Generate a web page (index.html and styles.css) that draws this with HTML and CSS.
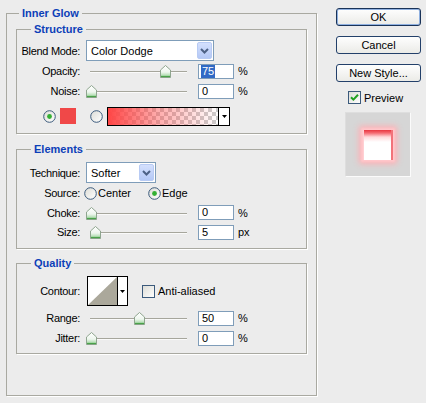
FILE: index.html
```html
<!DOCTYPE html>
<html>
<head>
<meta charset="utf-8">
<link rel="stylesheet" href="styles.css">
</head>
<body>
<div class="dialog">
  <fieldset class="group outer">
    <legend class="legend-outer">Inner Glow</legend>

    <fieldset class="group sub structure">
      <legend>Structure</legend>
      <div class="row row-select">
        <span class="lbl">Blend Mode:</span>
        <div class="select blend">
          <span class="select-txt">Color Dodge</span>
          <span class="select-btn"><svg width="9" height="6" viewBox="0 0 9 6"><path d="M1 1 L4.5 4.5 L8 1" fill="none" stroke="#4d6185" stroke-width="2"/></svg></span>
        </div>
      </div>
      <div class="row row-slider">
        <span class="lbl">Opacity:</span>
        <div class="slider"><div class="track"></div><svg class="thumb" style="left:75px" width="11" height="13" viewBox="0 0 11 13"><use href="#thumb"/></svg></div>
        <div class="num"><span class="hl">75</span></div>
        <span class="unit">%</span>
      </div>
      <div class="row row-slider">
        <span class="lbl">Noise:</span>
        <div class="slider"><div class="track"></div><svg class="thumb" style="left:1px" width="11" height="13" viewBox="0 0 11 13"><use href="#thumb"/></svg></div>
        <div class="num">0</div>
        <span class="unit">%</span>
      </div>
      <div class="row row-color">
        <svg class="radio r-first" width="13" height="13" viewBox="0 0 13 13"><use href="#radio-on"/></svg>
        <span class="swatch"></span>
        <svg class="radio r-second" width="13" height="13" viewBox="0 0 13 13"><use href="#radio-off"/></svg>
        <div class="gradpick">
          <span class="grad"></span>
          <span class="pick-arrow"><svg width="5" height="3" viewBox="0 0 5 3"><path d="M0 0 H5 L2.5 3 Z" fill="#000"/></svg></span>
        </div>
      </div>
    </fieldset>

    <fieldset class="group sub elements">
      <legend>Elements</legend>
      <div class="row row-select">
        <span class="lbl">Technique:</span>
        <div class="select technique">
          <span class="select-txt">Softer</span>
          <span class="select-btn"><svg width="9" height="6" viewBox="0 0 9 6"><path d="M1 1 L4.5 4.5 L8 1" fill="none" stroke="#4d6185" stroke-width="2"/></svg></span>
        </div>
      </div>
      <div class="row row-source">
        <span class="lbl">Source:</span>
        <svg class="radio src-first" width="13" height="13" viewBox="0 0 13 13"><use href="#radio-off"/></svg>
        <span class="opt">Center</span>
        <svg class="radio src-second" width="13" height="13" viewBox="0 0 13 13"><use href="#radio-on"/></svg>
        <span class="opt">Edge</span>
      </div>
      <div class="row row-slider row-choke">
        <span class="lbl">Choke:</span>
        <div class="slider"><div class="track"></div><svg class="thumb" style="left:1px" width="11" height="13" viewBox="0 0 11 13"><use href="#thumb"/></svg></div>
        <div class="num">0</div>
        <span class="unit">%</span>
      </div>
      <div class="row row-slider">
        <span class="lbl">Size:</span>
        <div class="slider"><div class="track"></div><svg class="thumb" style="left:5px" width="11" height="13" viewBox="0 0 11 13"><use href="#thumb"/></svg></div>
        <div class="num">5</div>
        <span class="unit">px</span>
      </div>
    </fieldset>

    <fieldset class="group sub quality">
      <legend>Quality</legend>
      <div class="row row-contour">
        <span class="lbl">Contour:</span>
        <div class="contour">
          <svg class="curve" width="29" height="28" viewBox="0 0 29 28"><polygon points="0,28 29,0 29,28" fill="#aba89b"/></svg>
          <span class="contour-arrow"><svg width="5" height="3" viewBox="0 0 5 3"><path d="M0 0 H5 L2.5 3 Z" fill="#000"/></svg></span>
        </div>
        <svg class="check aa" width="13" height="13" viewBox="0 0 13 13"><use href="#check-off"/></svg>
        <span class="opt">Anti-aliased</span>
      </div>
      <div class="row row-slider row-range">
        <span class="lbl">Range:</span>
        <div class="slider"><div class="track"></div><svg class="thumb" style="left:49px" width="11" height="13" viewBox="0 0 11 13"><use href="#thumb"/></svg></div>
        <div class="num">50</div>
        <span class="unit">%</span>
      </div>
      <div class="row row-slider">
        <span class="lbl">Jitter:</span>
        <div class="slider"><div class="track"></div><svg class="thumb" style="left:1px" width="11" height="13" viewBox="0 0 11 13"><use href="#thumb"/></svg></div>
        <div class="num">0</div>
        <span class="unit">%</span>
      </div>
    </fieldset>
  </fieldset>

  <div class="side">
    <div class="btn btn-default">OK</div>
    <div class="btn">Cancel</div>
    <div class="btn">New Style...</div>
    <div class="preview-row">
      <svg class="check" width="13" height="13" viewBox="0 0 13 13"><use href="#check-off"/><path d="M3 6.2 L5.4 8.6 L10 3.8" fill="none" stroke="#21a121" stroke-width="2"/></svg>
      <span class="opt">Preview</span>
    </div>
    <div class="preview-box"><div class="preview-square"></div></div>
  </div>
</div>

<svg class="defs" width="0" height="0">
  <defs>
    <linearGradient id="thumbfill" x1="0" y1="0" x2="0" y2="1">
      <stop offset="0" stop-color="#ffffff"/>
      <stop offset="0.55" stop-color="#eef6ee"/>
      <stop offset="1" stop-color="#8fcf8f"/>
    </linearGradient>
    <linearGradient id="radiofill" x1="0" y1="0" x2="1" y2="1">
      <stop offset="0" stop-color="#dcdcd6"/>
      <stop offset="1" stop-color="#ffffff"/>
    </linearGradient>
    <symbol id="thumb" viewBox="0 0 11 13">
      <path d="M5.5 0.5 L10.5 5 V12.5 H0.5 V5 Z" fill="url(#thumbfill)" stroke="#8fa58f"/>
      <path d="M1 11.5 H10" stroke="#4aa24a" stroke-width="1.2"/>
    </symbol>
    <symbol id="radio-off" viewBox="0 0 13 13">
      <circle cx="6.5" cy="6.5" r="5.8" fill="url(#radiofill)" stroke="#3b5a7c"/>
    </symbol>
    <symbol id="radio-on" viewBox="0 0 13 13">
      <circle cx="6.5" cy="6.5" r="5.8" fill="url(#radiofill)" stroke="#3b5a7c"/>
      <circle cx="6.5" cy="6.5" r="2.4" fill="#33b033"/>
    </symbol>
    <symbol id="check-off" viewBox="0 0 13 13">
      <rect x="0.5" y="0.5" width="12" height="12" fill="url(#radiofill)" stroke="#3b5a7c"/>
    </symbol>
  </defs>
</svg>
</body>
</html>
```

FILE: styles.css
```css
html, body {
  margin: 0;
  padding: 0;
}

body {
  background: #ececec;
  font-family: "Liberation Sans", Arial, sans-serif;
  font-size: 11px;
  color: #000;
}

.defs {
  position: absolute;
  width: 0;
  height: 0;
  overflow: hidden;
}

.dialog {
  display: flex;
  align-items: flex-start;
  padding: 6px 0 0 6px;
  height: 403px;
  box-sizing: border-box;
}

/* group boxes */
.group {
  margin: 0;
  padding: 0;
  min-width: 0;
  border: 1px solid #a9a9a1;
  box-shadow: 1px 1px 0 #ffffff;
}

.group > legend {
  padding: 0 3px;
  margin-left: 14px;
  font-weight: bold;
  color: #0c3fb8;
  line-height: 14px;
  font-size: 11px;
}

.outer {
  width: 311px;
  box-sizing: border-box;
  padding: 0 9px 41px 9px;
}

.outer > .legend-outer {
  margin-left: 3px;
}

.structure {
  margin-top: 2px;
  padding: 4px 0 7px 0;
}

.elements {
  margin-top: 8px;
  padding: 6px 0 6px 0;
}

.quality {
  margin-top: 7px;
  padding: 6px 0 5px 0;
}

/* rows */
.row {
  display: flex;
  align-items: center;
}

.lbl {
  flex: none;
  width: 63px;
  text-align: right;
  letter-spacing: -0.3px;
  white-space: nowrap;
}

.opt {
  white-space: nowrap;
}

.row-select {
  height: 21px;
}

.row-slider {
  height: 20px;
}

.row-choke {
  height: 19px;
}

.row-source {
  height: 20px;
}

.row-color {
  height: 20px;
  margin-top: 5px;
}

.row-contour {
  height: 30px;
}

.row-range {
  margin-top: 2px;
}

/* select */
.select {
  margin-left: 6px;
  height: 21px;
  box-sizing: border-box;
  border: 1px solid #7f9db9;
  background: #ffffff;
  display: flex;
  align-items: center;
}

.select.blend {
  width: 128px;
}

.select.technique {
  width: 70px;
}

.select-txt {
  flex: 1;
  padding-left: 4px;
  white-space: nowrap;
}

.select-btn {
  width: 15px;
  height: 17px;
  margin-right: 1px;
  box-sizing: border-box;
  border: 1px solid #b8cbf4;
  border-radius: 2px;
  background: linear-gradient(#d4e0fd, #b4c8f6);
  display: flex;
  align-items: center;
  justify-content: center;
}

/* slider */
.slider {
  position: relative;
  flex: none;
  width: 106px;
  height: 20px;
  margin-left: 5px;
}

.track {
  margin: 10px 4px 0 5px;
  height: 0;
  border-top: 1px solid #a6a69c;
  border-bottom: 1px solid #fafafa;
}

.thumb {
  position: absolute;
  top: 4px;
  display: block;
}

.num {
  flex: none;
  margin-left: 7px;
  width: 36px;
  height: 15px;
  box-sizing: border-box;
  border: 1px solid #7f9db9;
  background: #ffffff;
  padding-left: 3px;
  line-height: 13px;
  display: flex;
  align-items: stretch;
}

.num .hl {
  background: #316ac5;
  color: #ffffff;
  padding: 0 1px;
  margin-left: -1px;
}

.unit {
  margin-left: 4px;
}

/* radios / checks */
.radio, .check {
  display: block;
  flex: none;
}

.r-first {
  margin-left: 26px;
}

.swatch {
  width: 16px;
  height: 16px;
  margin-left: 4px;
  background: #f04848;
}

.r-second {
  margin-left: 14px;
}

.gradpick {
  margin-left: 4px;
  width: 123px;
  height: 19px;
  box-sizing: border-box;
  border: 1px solid #000;
  display: flex;
}

.grad {
  flex: 1;
  background:
    linear-gradient(to right, rgba(255, 70, 70, 1) 0%, rgba(255, 70, 70, 0.45) 45%, rgba(255, 70, 70, 0) 100%),
    repeating-conic-gradient(#cccccc 0 25%, #ffffff 0 50%) 0 0 / 8px 8px;
}

.pick-arrow {
  width: 10px;
  border-left: 1px solid #000;
  background: #fff;
  display: flex;
  align-items: center;
  justify-content: center;
}

.src-first {
  margin-left: 4px;
}

.src-second {
  margin-left: 17px;
}

.row-source .opt {
  margin-left: 1px;
}

/* contour */
.contour {
  margin-left: 7px;
  width: 41px;
  height: 30px;
  box-sizing: border-box;
  border: 1px solid #000;
  background: #fff;
  display: flex;
}

.curve {
  display: block;
  flex: none;
  border-right: 1px solid #000;
}

.contour-arrow {
  flex: 1;
  display: flex;
  align-items: center;
  justify-content: center;
}

.aa {
  margin-left: 14px;
}

.aa + .opt {
  margin-left: 3px;
}

/* side column */
.side {
  margin-left: 19px;
  padding-top: 2px;
  display: flex;
  flex-direction: column;
}

.btn {
  width: 85px;
  height: 18px;
  box-sizing: border-box;
  border: 1px solid #23406a;
  border-radius: 3px;
  background: linear-gradient(#fefefe, #ebebe7);
  display: flex;
  align-items: center;
  justify-content: center;
  font-size: 11px;
}

.btn + .btn {
  margin-top: 10px;
}

.btn-default {
  border-color: #1a3358;
  box-shadow: inset 0 0 0 1px #8fb0e0;
}

.preview-row {
  margin: 9px 0 0 12px;
  display: flex;
  align-items: center;
  height: 13px;
}

.preview-row .opt {
  margin-left: 3px;
}

.preview-box {
  margin: 8px 0 0 9px;
  width: 66px;
  height: 65px;
  box-sizing: border-box;
  border: 1px solid;
  border-color: #dedede #fbfbfb #fbfbfb #dedede;
  background: #d6d6d6;
  display: flex;
  align-items: center;
  justify-content: center;
}

.preview-square {
  width: 30px;
  height: 30px;
  background: linear-gradient(#e8353f 0, #f56a72 3px, #ffd9db 7px, #ffffff 12px);
  box-shadow: 0 0 2px 2px #ffc8cb, 0 0 6px 4px #ffb0b5, inset -2px 0 0 #f2737a, inset 1px 0 0 #ffd0d3;
}
```
